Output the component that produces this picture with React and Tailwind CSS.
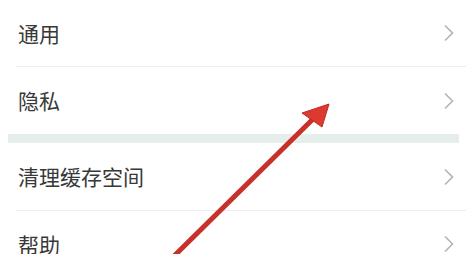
export default function App() {
  const Chevron = () => (
    <svg width="12" height="18" viewBox="0 0 12 18" className="shrink-0">
      <path d="M2 1.5 L9.5 9 L2 16.5" fill="none" stroke="#b3b3b3" strokeWidth="1.6" />
    </svg>
  );

  const Row = ({ label, h }) => (
    <div className={`flex items-center justify-between pl-[18px] pr-[11px] ${h}`}>
      <span className="text-[21px] leading-none text-[#383838]">{label}</span>
      <Chevron />
    </div>
  );

  return (
    <div
      className="relative w-[466px] h-[254px] overflow-hidden bg-white"
      style={{ fontFamily: '"Noto Sans CJK SC", "Noto Sans", sans-serif' }}
    >
      <Row label="通用" h="h-[66px]" />
      <div className="ml-4 h-px bg-[#eeeeee]" />
      <Row label="隐私" h="h-[67px]" />
      <div className="ml-2 mr-[7px] h-[9px] bg-[#e6eeeb]" />
      <Row label="清理缓存空间" h="h-[67px]" />
      <div className="ml-4 h-px bg-[#eeeeee]" />
      <Row label="帮助" h="h-[66px]" />

      <svg className="absolute inset-0" width="466" height="254" viewBox="0 0 466 254">
        <line x1="168" y1="262" x2="314" y2="118" stroke="#c8302a" strokeWidth="5" />
        <polygon points="329,104 302,113 322,127" fill="#dc3a30" stroke="#c02a24" strokeWidth="1" />
      </svg>
    </div>
  );
}
